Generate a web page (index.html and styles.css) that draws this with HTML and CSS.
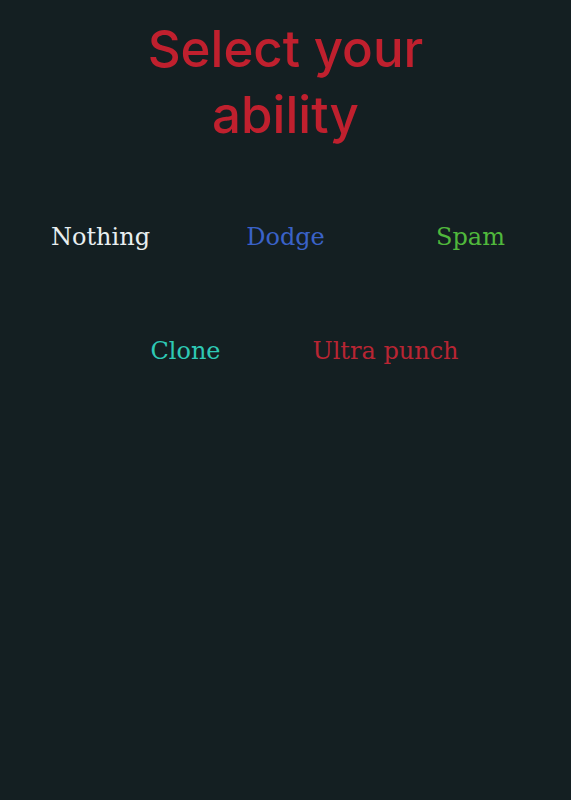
FILE: index.html
```html
<!DOCTYPE html>
<html>
<head>
<meta charset="utf-8">
<link rel="stylesheet" href="styles.css">
</head>
<body>
<main class="screen">
  <h1 class="title">Select your<br>ability</h1>
  <div class="row row-three">
    <button class="ability nothing">Nothing</button>
    <button class="ability dodge">Dodge</button>
    <button class="ability spam">Spam</button>
  </div>
  <div class="row row-two">
    <button class="ability clone">Clone</button>
    <button class="ability ultra">Ultra punch</button>
  </div>
</main>
</body>
</html>
```
FILE: styles.css
```css
html, body {
  margin: 0;
  padding: 0;
  background: #141f22;
  height: 100%;
}
.screen {
  padding: 0 8px;
  min-height: 800px;
  box-sizing: border-box;
}
.title {
  margin: 0;
  padding-top: 16px;
  text-align: center;
  font-family: Inter, "Open Sans", sans-serif;
  font-weight: 500;
  font-size: 51px;
  line-height: 66px;
  color: #c0202e;
}
.row {
  display: grid;
  justify-items: center;
  margin: 0 auto;
}
.row-three {
  grid-template-columns: repeat(3, 1fr);
  margin-top: 71px;
}
.row-two {
  grid-template-columns: repeat(2, 1fr);
  width: 400px;
  margin-top: 78px;
}
.ability {
  background: none;
  border: none;
  padding: 0;
  font-family: "DejaVu Serif", serif;
  font-size: 24px;
  line-height: 36px;
  cursor: pointer;
}
.nothing { color: #e8eef0; }
.dodge { color: #3a62c8; }
.spam { color: #50b83c; }
.clone { color: #2ec9b5; }
.ultra { color: #b82533; }
```
